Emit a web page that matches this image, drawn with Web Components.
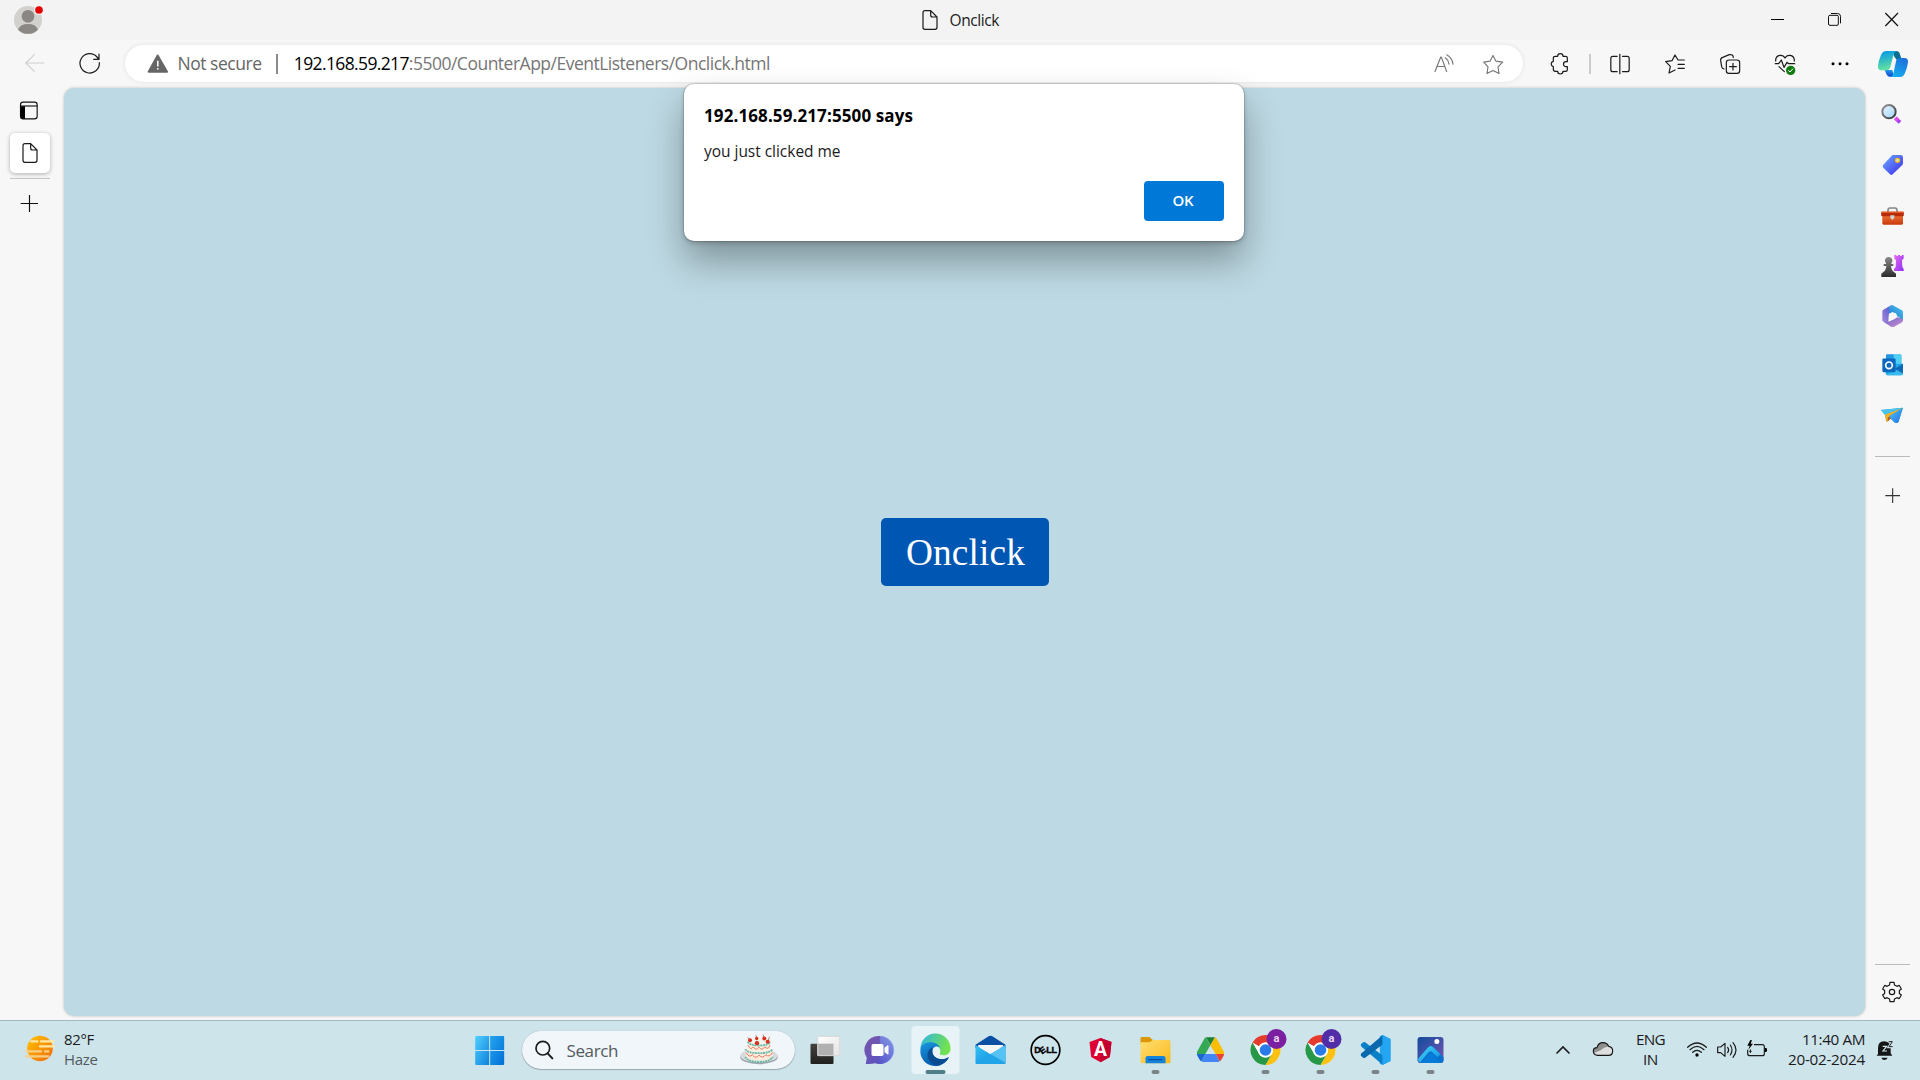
<!DOCTYPE html>
<html lang="en">
<head>
<meta charset="utf-8">
<title>Onclick</title>
<style>
html,body{margin:0;height:100%;overflow:hidden}
body{font-family:"Open Sans","Noto Sans",sans-serif;color:#1b1b1b;background:#f7f7f7}
</style>
</head>
<body>
<desk-top></desk-top>
<script>
/* Icons: [x, y, width, height, markup], three drawing units to one pixel. */
const gear=(cx,cy)=>{let p=[];for(let i=0;i<6;i++)for(const [a,r] of [[-19,22.5],[-12,29.5],[12,29.5],[19,22.5]]){const t=(i*60+a-90)*Math.PI/180;p.push((cx+r*Math.cos(t)).toFixed(1)+' '+(cy+r*Math.sin(t)).toFixed(1))}return 'M'+p.join('L')+'z'};
const line='fill="none" stroke="#1a1a1a" stroke-width="3.6" stroke-linecap="round" stroke-linejoin="round"';
const grey='fill="none" stroke="#757575" stroke-width="3.4" stroke-linecap="round" stroke-linejoin="round"';
const lg=(id,a,b,dir='0 0 1 1')=>{const d=dir.split(' ');return `<linearGradient id="${id}" x1="${d[0]}" y1="${d[1]}" x2="${d[2]}" y2="${d[3]}"><stop stop-color="${a}"/><stop offset="1" stop-color="${b}"/></linearGradient>`};
const dot=x=>`<rect x="${x-12}" y="180" width="24" height="12" rx="6" fill="#7a8487"/>`;
const chrome=(cx,badge)=>`<g transform="translate(${cx} 120)"><circle r="45" fill="#fff"/>
<path d="M-39-22.5A45 45 0 0 1 39-22.5H0A22.5 22.5 0 0 0-19.5-11z" fill="#e33b2e"/>
<path d="M39-22.5A45 45 0 0 1 0 45L19.5 11.2A22.5 22.5 0 0 0 0-22.5z" fill="#fdc112"/>
<path d="M0 45A45 45 0 0 1-39-22.5L-19.5 11.2A22.5 22.5 0 0 0 19.5 11.2z" fill="#279847"/>
<circle r="22.5" fill="#fff"/><circle r="17.5" fill="#2a7bea"/>
<circle cx="33" cy="-33" r="30" fill="${badge}"/><text x="33" y="-24" text-anchor="middle" font-family="Roboto" font-weight="700" font-size="33" fill="#e9d7f2">a</text></g>`+dot(cx);
const file='M75 431H92L111 450V481Q111 487 105 487H75Q69 487 69 481V437Q69 431 75 431zM92 431V444Q92 450 98 450H111';
const ICONS={
avatar:[39,12,96,96,'<circle cx="84" cy="60" r="42" fill="#d3d1cd"/><circle cx="84" cy="49" r="19" fill="#8a8784"/><path d="M54 89Q60 72 84 72T114 89A42 42 0 0 1 54 89z" fill="#8a8784"/><circle cx="117" cy="30" r="15" fill="#f3f3f3"/><circle cx="117" cy="30" r="11.5" fill="#e50000"/>'],
back:[72,159,66,66,'<path d="M133 189H77M104 163L77 189L104 215" fill="none" stroke="#cfcfcf" stroke-width="3.4"/>'],
reload:[237,159,66,66,`<path ${line} d="M298 188A29 29 0 1 1 291 171L296 177M297 162V178H281"/>`],
warn:[440,157.5,66,66,'<path d="M472 165L500 214H445z" fill="#666" stroke="#666" stroke-width="6" stroke-linejoin="round"/><path d="M472.500 181V198" stroke="#fff" stroke-width="4.500"/><circle cx="472.500" cy="205" r="2.800" fill="#fff"/>'],
tabs:[57,300,60,63,'<rect x="61.500" y="306.500" width="50" height="50" rx="8" fill="none" stroke="#111" stroke-width="3.400"/><path d="M62 318.500H75V356H68Q62 356 62 350z"/><path d="M62 318H112" stroke="#111" stroke-width="3.400"/>'],
file:[63,426,54,66,`<path ${line} d="${file}"/>`],
plus:[60,582,57,57,'<path d="M88.500 585V636M62 610.500H114" stroke="#111" stroke-width="3.500"/>'],
min:[1107,36,45,45,'<path d="M1110 58.500H1149" stroke="#000" stroke-width="3"/>'],
restore:[1278,36,45,45,'<path fill="none" stroke="#111" stroke-width="3" d="M1287 46H1308Q1312 46 1312 50V72Q1312 76 1308 76H1287Q1282.500 76 1282.500 72V50Q1282.500 46 1287 46zM1290 40.500H1310Q1318.500 41 1318.500 49V70"/>'],
close:[1451,36,45,45,'<path d="M1455 39L1493 78M1493 39L1455 78" stroke="#111" stroke-width="3.600"/>'],
read:[97,157.5,66,66,`<path ${grey} d="M103 213L120 170H122L138 213M109 198H132M134 172Q143 178 145 191M138 163Q154 171 157 191"/>`],
star:[244,157.5,66,66,`<path ${grey} d="M277 165L286 182L306 185L292 199L295 219L277 210L259 219L262 199L249 185L268 182z"/>`],
puzzle:[447,159,66,66,`<path ${line} d="M466 169H473A8 8 0 0 1 489 169H497Q502 169 502 174V185H498A7 7 0 0 0 498 200H502V209Q502 214 497 214H489A8 8 0 0 1 473 214H466Q460 214 460 208V200A8.200 8.200 0 0 1 460 184V174Q460 169 466 169z"/>`],
split:[625.5,159,66,66,`<path ${line} d="M650 169H637Q631 169 631 175V209Q631 215 637 215H650M666 169H680Q686 169 686 175V209Q686 215 680 215H666M658 163V221"/>`],
favs:[792,159,66,66,`<path ${line} d="M853 180H834L825 165L816 182L797 185L811 199L807 219L825 210M834 193H853M834 205H853"/>`],
coll:[957,159,66,66,`<path ${line} d="M987 180H1011Q1019 180 1019 188V212Q1019 220 1011 220H987Q979 220 979 212V188Q979 180 987 180zM999 190V210M989 200H1009M972 207Q966 205 965 200L962 182Q961 174 968 172L988 164Q999 162 1000 172"/>`],
heart:[1122,159,66,66,`<path ${line} d="M1127 183Q1126 168 1140 166Q1150 165 1155 174Q1160 165 1170 166Q1184 168 1183 183M1126 191H1136L1144 180L1152 202L1161 187L1166 191H1184M1137 200L1153 215"/><circle cx="1172" cy="211" r="14" fill="#107c10"/><path d="M1165 211L1170 216L1179 206" fill="none" stroke="#fff" stroke-width="3"/>`],
dots:[1287,159,66,66,'<circle cx="1299" cy="191.500" r="4.500"/><circle cx="1320" cy="191.500" r="4.500"/><circle cx="1341" cy="191.500" r="4.500"/>'],
copilot:[1431,144,96,96,lg('a','#0094ea','#62e2a0','0 0 0.2 1')+lg('b','#1e73dd','#12b9f3','0.6 0 0 1')+lg('c','#2099e8','#183fd0','0 0 0 1')+'<path d="M1476 153H1489Q1497 153 1500 163L1505 179H1490Q1483 174 1480 163z" fill="#086d91"/><path d="M1454 210H1477L1482 231H1473Q1463 231 1459 222z" fill="url(#c)"/><path d="M1459 153H1490Q1483 155 1481 163L1471 201Q1468 211 1459 211H1446Q1433 211 1434 197Q1435 184 1443 165Q1448 153 1459 153z" fill="url(#a)"/><path d="M1499 174H1513Q1525 174 1524 187Q1522 204 1514 221Q1509 231 1498 231H1469Q1478 229 1480 221L1488 184Q1490 174 1499 174z" fill="url(#b)"/>'],
lens:[180,70,72,66,lg('a','#eaf6ff','#9fd3ff')+lg('b','#999','#333')+'<path d="M226 115L240 128" stroke="#a63df4" stroke-width="11"/><path d="M226 115L234 122" stroke="#e14df6" stroke-width="11"/><circle cx="207" cy="96" r="20" fill="url(#a)" stroke="url(#b)" stroke-width="6"/>'],
tag:[180,223,72,66,lg('a','#6fb0ff','#3a25ef')+'<path d="M217 226H242Q249 226 249 233V251Q249 254 246 257L218 284Q214 288 210 284L190 264Q186 260 190 255z" fill="url(#a)"/><circle cx="232.500" cy="242" r="6" fill="#d8e7e0" stroke="#f4bd10" stroke-width="4"/>'],
tools:[180,375,72,66,lg('a','#f07030','#c73a10','0 0 0 1')+'<path d="M204 397V391Q204 384 210 384H225Q231 384 231 391V397" fill="none" stroke="#85898c" stroke-width="5"/><path d="M187 405H249V430Q249 434 245 434H191Q187 434 187 430z" fill="url(#a)"/><rect x="183.500" y="395" width="68" height="14" rx="3" fill="#b62c09"/><path d="M184 397H251" stroke="#e45a20" stroke-width="4"/><path d="M211 406H223V414L217 420L211 414z" fill="#cdd2d5"/>'],
games:[180,524,72,66,lg('a','#e86cf2','#8e30f2')+lg('b','#8a8a8a','#2c2c2c','0 0 0 1')+'<path d="M223 522H229V527H234V522H240V527H245V522H251V534Q251 538 246 539L247 560L251 566V572H222V566L227 560L228 539Q223 538 223 534z" fill="url(#a)"/><path d="M206 530A11 11 0 0 1 214 549V551H220V557H213Q214 572 224 576V579H228V590H184V579H188V576Q198 572 199 557H191V551H198V549A11 11 0 0 1 206 530z" fill="url(#b)"/>'],
m365:[180,43,72,66,lg('a','#4658c8','#a887dc','1 0 0 1')+lg('b','#4bc7ee','#2272cf','1 0 0 1')+lg('c','#6d67c9','#c98bd0')+'<path d="M218 43L207 49V68L205 92L212 97L201 99L187 90V62Q187 59 190 57L213 44Q215 42 218 43z" fill="url(#a)"/><path d="M232 80L249 84V90Q248 93 244 96L222 108Q218 110 213 108L188 92Q200 98 211 91z" fill="url(#c)"/><path d="M217 43L246 59Q249 61 249 65V87L232 77L228 68L217 65L207 69V49z" fill="url(#b)"/><path d="M217 65.500L227 71V82L217 87.500L207.500 82V71z" fill="#f7f7f7" stroke="#f7f7f7" stroke-linejoin="round"/>'],
outlook:[180,193.5,72,66,'<rect x="198" y="195" width="46" height="42" rx="3" fill="#1e8bdb"/><path d="M198 209V198Q198 195 201 195H221V209z" fill="#2196e2"/><path d="M221 195H240Q244 195 244 199V224H221z" fill="#4fd1f5"/><path d="M197 223H249V251Q249 257 243 257H203Q197 257 197 251z" fill="#22a7e8"/><path d="M224 238L249 223V255z" fill="#1069b7"/><path d="M226 239L249 252Q249 257 243 257H200z" fill="#38baf1"/><rect x="187" y="207" width="40" height="41" rx="4" fill="#0b68bd"/><circle cx="207" cy="227.500" r="10" fill="none" stroke="#fff" stroke-width="5"/>'],
plane:[180,342,72,66,lg('a','#4ac5ee','#256ff0')+'<path d="M183 360L249 353L236 396Q230 402 223 397L209 383L199 396L195 374z" fill="#26a4dd"/><path d="M195 373L249 354L208 378L202 395H199z" fill="#f7b11b"/><path d="M203 395V384L209 378L214 384z" fill="#b35c22"/><path d="M248 355L235 395Q230 402 223 397L207 379z" fill="url(#a)"/><path d="M183 360L248 353L194 374z" fill="#47c3ec"/>'],
thin:[190,591,52,52,'<path d="M216 595V639M194 617H238" stroke="#333" stroke-width="3.300"/>'],
gear:[484,124,66,66,`<path ${line} d="${gear(517,157)}"/><circle cx="517" cy="157" r="8" ${line}/>`],
sun:[69,30,102,180,lg('a','#ffc400','#f06a0a')+'<circle cx="120" cy="115.500" r="38.500" fill="url(#a)"/><g fill="none" stroke-linecap="round"><path d="M94 94H112M123 94H161M120 109H162" stroke="#ffe9a8" stroke-width="7"/><path d="M79 124H123M135 124H145M79 139H145" stroke="#f8cf87" stroke-width="7"/></g>'],
win:[5.5,30,165,180,lg('a','#52d0ff','#0d80dc')+lg('b','#25a5ef','#006fd6')+'<path d="M45 81Q45 78 48 78H87V120H45zM45 123H87V165H48Q45 165 45 162z" fill="url(#a)"/><path d="M90 78H129Q132 78 132 81V120H90zM90 123H132V162Q132 165 129 165H90z" fill="url(#b)"/>'],
find:[225,87,66,66,'<circle cx="251.500" cy="114.500" r="20.500" fill="none" stroke="#1b1b1b" stroke-width="5"/><path d="M266 130L280 145" stroke="#1b1b1b" stroke-width="6" stroke-linecap="round"/>'],
cake:[837,64.500,120,112,'<ellipse cx="897" cy="143" rx="56" ry="21" fill="#9ba4a8"/><ellipse cx="897" cy="139" rx="56" ry="20" fill="#d5dadd"/><path d="M857 118V143Q857 157 897 157T937 143V118z" fill="#f9ecda"/><ellipse cx="896" cy="119" rx="39" ry="10" fill="#fff4e2"/><path d="M863 94V115Q866 126 897 126T931 115V94z" fill="#fbefdc"/><ellipse cx="897" cy="95" rx="34" ry="12" fill="#f5f4ed"/><g fill="none" stroke="#63b8af" stroke-width="5.500" stroke-dasharray="6 2"><path d="M863 97Q870 108 897 108T931 97M856 119Q864 131 897 131T938 119M856 142Q864 157 897 157T938 142"/></g><g fill="none" stroke="#e8776b" stroke-width="3"><path d="M864 107Q872 124 880 112Q888 126 897 113Q906 126 914 112Q925 123 930 107M858 129Q868 146 877 136Q888 150 897 137Q908 149 917 136Q929 145 937 129"/></g><g fill="none" stroke="#8d4b3c" stroke-width="2"><path d="M870 92L863 84M890 86L888 77M913 86L909 75M924 97L928 82M891 101L890 94"/></g><g fill="#d8301f"><circle cx="870" cy="92" r="6"/><circle cx="890" cy="87" r="5"/><circle cx="913" cy="87" r="6"/><circle cx="891" cy="101" r="6.500"/><circle cx="923" cy="97" r="6"/></g>'],
task:[1015.5,30,165,180,lg('a','#43423f','#20201e','0 0 0 1')+lg('b','#fff','#e3e3e3')+'<rect x="1053" y="101" width="69" height="61" rx="3" fill="url(#a)"/><rect x="1074" y="78" width="68" height="60" rx="2" fill="url(#b)"/><path d="M1074 101H1122V138H1074z" fill="#b0b1b0"/><rect x="1075" y="79" width="66" height="58" rx="2" fill="none" stroke="#d6d6d6" stroke-width="3"/>'],
chat:[1180.5,30,165,180,lg('a','#7956a7','#5252cb')+lg('b','#8baaf5','#5558d0','0.6 0 0 1')+'<path d="M1261 78A43 42 0 1 1 1246 160Q1238 163 1219 162Q1220 153 1222 143A43 42 0 0 1 1261 78z" fill="url(#a)"/><path d="M1261 78A43 42 0 1 1 1261 162z" fill="url(#b)" opacity=".7"/><rect x="1236" y="102" width="36" height="36" rx="5" fill="#fff"/><path d="M1275 113L1284 106Q1287 105 1287 109V131Q1287 135 1284 133L1275 127z" fill="#fff"/>'],
edge:[25.5,30,165,180,lg('a','#2fb4e8','#73e34d','0 0 1 .3')+lg('b','#1898df','#0755a8','0 0 0.5 1')+'<rect x="36" y="48" width="144" height="144" rx="12" fill="#e8f3f8"/><path d="M63 117A45 45 0 0 1 153 114C155 132 135 142 120 132C125 128 124 111 108 105C91 99 72 105 63 117z" fill="url(#a)"/><path d="M63 116C69 91 111 91 122 113C110 104 96 113 99 129C104 147 128 154 147 141Q149 143 145 148A45 45 0 0 1 63 116z" fill="url(#b)"/><path d="M99 111C75 126 82 154 107 164C124 167 141 155 147 143C126 153 103 146 99 129Q98 118 99 111z" fill="#0a4c91"/><rect x="78" y="180" width="60" height="12" rx="6" fill="#4f7d8a"/>'],
mail:[190.5,30,165,180,lg('a','#36c4f5','#0c82dc')+'<path d="M228 104L265 80Q273 75 281 80L318 104V114H228z" fill="#0a4fa3"/><path d="M235 105H312L273 134z" fill="#fff"/><path d="M228 105L273 132L318 105V158Q318 162 314 162H232Q228 162 228 158z" fill="url(#a)"/><path d="M236 106H310V110L273 132L236 110z" fill="#f4f5f6"/><path d="M228 159L273 132L318 159Q317 162 314 162H232z" fill="#22a4e8"/><path d="M273 132L318 105V159z" fill="#54c2f3"/>'],
dell:[355.5,30,165,180,'<circle cx="438" cy="120" r="43" fill="none" stroke="#000" stroke-width="5"/><g font-family="Liberation Sans" font-weight="700" font-size="27" stroke="#000" stroke-width="1"><text x="404" y="130">D</text><text x="421" y="130" transform="rotate(-35 430 121)">E</text><text x="440" y="130">L</text><text x="456" y="130">L</text></g>'],
angular:[520.5,30,165,180,'<path d="M603 84L636 96L631 141L603 157L575 141L570 96z" fill="#dd0031"/><path d="M603 84L636 96L631 141L603 157z" fill="#c3002f"/><text x="603" y="137" text-anchor="middle" font-family="Roboto" font-weight="700" font-size="58" fill="#fff">A</text>'],
folder:[685.5,30,165,180,lg('a','#ffdf72','#fbb91c')+'<path d="M723 84Q723 81 727 81H750L761 91H780V105H723z" fill="#dd9807"/><path d="M723 97H748Q753 97 756 93L760 90H808Q813 90 813 95V155Q813 160 808 160H728Q723 160 723 155z" fill="url(#a)"/><path d="M738 160V145Q738 138 745 138H791Q798 138 798 145V160z" fill="#1384dc"/><path d="M748 149H787" stroke="#084f9f" stroke-width="4" stroke-linecap="round"/>'+dot(768)],
drive:[-20,30,165,180,'<path d="M49 82H76L62.500 106z" fill="#188038"/><path d="M49 82Q46 83 44 86L23 124Q21 128 22 132H47L62 106z" fill="#34a853"/><path d="M76 82Q79 83 81 86L102 124Q104 128 103 132H78L62 106z" fill="#fbbc04"/><path d="M47 132H78L90 154Q88 156 84 156H41Q37 156 35 154z" fill="#4285f4"/><path d="M22 132H47L35 154Q32 152 30 149L24 139Q22 136 22 132z" fill="#1967d2"/><path d="M103 132H78L90 154Q93 152 95 149L101 139Q103 136 103 132z" fill="#ea4335"/>'],
chromeA:[145.5,30,165,180,chrome(228,'#7b1fa2')],
chromeB:[310.5,30,165,180,chrome(393,'#512da8')],
code:[475.5,30,165,180,'<path d="M579 75L603 87V153L579 165L571 161V79z" fill="#23a5f1"/><path d="M514 103L521 97Q524 95 527 97L580 137V165L516 110Q513 106 514 103z" fill="#0c7fc9"/><path d="M514 137L521 143Q524 145 527 143L580 103V75L516 130Q513 134 514 137z" fill="#0968ae"/><path d="M579 75L603 87V153L579 165z" fill="#23a5f1"/>'+dot(558)],
photos:[640.5,30,165,180,lg('a','#124b9c','#7557b4')+lg('b','#42d6f8','#118fe2')+'<rect x="684" y="81" width="78" height="78" rx="9" fill="url(#a)"/><path d="M685 150L715 114Q723 103 733 113L762 142V150Q762 159 753 159H693Q687 159 685 150z" fill="#0772cd"/><path d="M686 146L714 114Q723 103 733 113L753 133L744 142L728 126Q723 121 718 126L692 157Q685 155 686 146z" fill="url(#b)"/><path d="M696 159L718 133Q724 127 730 133L754 158L753 159z" fill="#087bd8"/><circle cx="742" cy="94.500" r="7.500" fill="#fff"/>'+dot(723)],
up:[54,30,90,180,'<path d="M81 129L99 111L117 129" fill="none" stroke="#1b1b1b" stroke-width="5" stroke-linecap="round"/>'],
cloud:[174,30,90,180,'<path d="M201 136Q190 134 190 124Q190 113 201 113Q205 98 219 98Q231 98 236 109Q249 111 248 124Q247 136 236 136z" fill="#dedede"/><path d="M201 125Q190 132 190 124Q190 113 201 113Q205 98 219 98Q231 98 236 109L222 113Q213 122 201 125z" fill="#8e8e8e"/><path d="M201 136Q190 134 190 124Q190 113 201 113Q205 98 219 98Q231 98 236 109Q249 111 248 124Q247 136 236 136z" fill="none" stroke="#151515" stroke-width="3.300"/>'],
wifi:[459,30,90,180,'<g fill="none" stroke="#1b1b1b" stroke-width="3.800" stroke-linecap="round"><path d="M476 112Q504 86 532 112M483 119Q504 99 525 119M491 127Q504 115 517 127"/></g><circle cx="504" cy="135" r="5"/>'],
sound:[549,30,90,180,'<path d="M566 111H575L588 100V139L575 128H566z" fill="none" stroke="#1b1b1b" stroke-width="3.500" stroke-linejoin="round"/><path d="M596 112Q602 120 596 128M604 105Q614 120 604 135M612 98Q630 120 612 142" fill="none" stroke="#1b1b1b" stroke-width="3.500" stroke-linecap="round"/>'],
battery:[639,30,90,180,'<path d="M675 104H700Q706 104 706 110V131Q706 137 700 137H664Q656 137 656 131V119" fill="none" stroke="#1b1b1b" stroke-width="3.500"/><path d="M707 114H710Q714 114 714 118V122Q714 126 710 126H707z"/><path d="M664 90L655 107H662L658 119L672 101H665L669 91z"/><path d="M664 118V129M661 124H668" stroke="#1b1b1b" stroke-width="3"/>'],
bell:[1022,30,90,180,'<path d="M1046 132V115Q1046 94 1064 94Q1082 94 1084 113V130L1089 137H1042z" fill="#151515"/><path d="M1056 143H1075Q1072 150 1065 150T1056 143z" fill="#151515"/><path d="M1060 109H1072L1061 123H1073" fill="none" stroke="#d3e6ec" stroke-width="3.500"/><path d="M1078 94H1090L1079 111H1090" fill="none" stroke="#cfe5eb" stroke-width="8"/><path d="M1078 95H1089L1079 110H1090" fill="none" stroke="#222" stroke-width="3"/>']
};
const define=(name,html,after)=>{const t=document.createElement('template');t.innerHTML=html;customElements.define(name,class extends HTMLElement{connectedCallback(){if(this.shadowRoot)return;this.attachShadow({mode:'open'}).append(t.content.cloneNode(true));after&&after(this,this.shadowRoot)}})};

define('ui-icon','<style>:host{display:block;flex:none}div,svg{display:block}</style><div></div>',(h,r)=>{
 const [x,y,w,k,m]=ICONS[h.getAttribute('name')];
 r.querySelector('div').innerHTML=`<svg width="${w/3}" height="${k/3}" viewBox="${x} ${y} ${w} ${k}">${m}</svg>`;
});
/* Text whose tracking is set so that it fills the width given in "w". */
define('ui-text','<style>:host{display:block;flex:none;white-space:nowrap}span{display:inline-block}</style><span><slot></slot></span>',(h,r)=>{
 const s=r.querySelector('span'),n=h.textContent.length;
 h.style.fontSize=h.getAttribute('size')+'px';
 const w=+h.getAttribute('w');
 s.style.letterSpacing=((w-s.getBoundingClientRect().width)/n).toFixed(3)+'px';
 h.style.width=w+'px';
});
define('title-bar',`<style>:host{display:flex;align-items:center;height:40px;background:#f3f3f3}
.tab{display:flex;align-items:center;margin-left:876px;gap:10.500px;flex:1}.win{display:flex;gap:42px;padding:0 21.300px 1px 0}ui-icon[name=avatar]{margin-left:13px}</style>
<ui-icon name="avatar"></ui-icon><div class="tab"><ui-icon name="file"></ui-icon><ui-text w="49.500" size="15.5">Onclick</ui-text></div>
<div class="win"><ui-icon name="min"></ui-icon><ui-icon name="restore"></ui-icon><ui-icon name="close"></ui-icon></div>`);
define('address-bar',`<style>:host{display:flex;align-items:center;box-sizing:border-box;width:1398px;height:37px;border-radius:19px;background:#fff;box-shadow:0 0 5px rgba(0,0,0,.09);padding:0 19.300px 0 21.700px;color:#666;flex:none}
ui-text{margin-bottom:1px}.s{margin-left:8.800px}i{width:1.700px;height:20px;background:#8a8a8a;margin:0 16px 0 14.700px}.h{color:#000}.end{display:flex;gap:27px;margin-left:auto}</style>
<ui-icon name="warn"></ui-icon><ui-text class="s" w="84" size="17.5">Not secure</ui-text><i></i><ui-text class="h" w="115" size="17.5">192.168.59.217</ui-text><ui-text w="361" size="17.5" style="color:#767676">:5500/CounterApp/EventListeners/Onclick.html</ui-text>
<div class="end"><ui-icon name="read"></ui-icon><ui-icon name="star"></ui-icon></div>`);
define('tool-bar',`<style>:host{display:flex;align-items:center;height:48px;background:#f7f7f7;padding-left:24px}
address-bar{margin:0 26px 1px 24px}.r{margin-left:33px}i{width:1.700px;height:20px;background:#ccc;margin:0 18.400px 0 18px}.g{display:flex;gap:33.100px;align-items:center}ui-icon[name=copilot]{margin-left:26px}</style>
<ui-icon name="back"></ui-icon><ui-icon class="r" name="reload"></ui-icon><address-bar></address-bar><ui-icon name="puzzle"></ui-icon><i></i>
<div class="g"><ui-icon name="split"></ui-icon><ui-icon name="favs"></ui-icon><ui-icon name="coll"></ui-icon><ui-icon name="heart"></ui-icon><ui-icon name="dots"></ui-icon></div><ui-icon name="copilot"></ui-icon>`);
define('tab-rail',`<style>:host{display:flex;flex-direction:column;width:64px;padding-top:12px;box-sizing:border-box;flex:none}
ui-icon[name=tabs]{margin-left:19px}.t{width:40px;height:40px;margin:12px 0 0 10px;background:#fff;border-radius:5px;box-shadow:0 1px 4px rgba(0,0,0,.3);display:flex;align-items:center;justify-content:center}
i{height:1px;width:40px;background:#c4c4c4;margin:5px 0 0 10px}ui-icon[name=plus]{margin:15px 0 0 20px}</style>
<ui-icon name="tabs"></ui-icon><div class="t"><ui-icon name="file"></ui-icon></div><i></i><ui-icon name="plus"></ui-icon>`);
define('web-page',`<style>:host{display:flex;align-items:center;justify-content:center;width:1801px;height:928px;border-radius:10px;background:#bdd9e3;box-shadow:0 0 3px rgba(0,0,0,.25);flex:none}
button{all:unset;box-sizing:border-box;width:168px;height:68px;padding-left:2px;background:#0056b3;border-radius:5px;color:#fff;font-family:"Liberation Serif",serif;display:flex;align-items:center;justify-content:center}</style>
<button><ui-text w="119" size="37.3">Onclick</ui-text></button>`);
define('side-bar',`<style>:host{display:flex;flex-direction:column;align-items:center;width:55px;padding-top:15.400px;padding-right:.6px;box-sizing:border-box;height:932px;flex:1}
.a{display:flex;flex-direction:column;gap:27.800px;align-items:center}[name=tag]{margin-top:1.100px}[name=tools]{margin-top:.9px}i{width:35px;height:1px;background:#bbb;flex:none}.a+i{margin-top:29.800px}ui-icon[name=thin]{margin-top:30.300px}.b{margin-top:auto;display:flex;flex-direction:column;align-items:center;gap:16.300px;padding-bottom:16.700px}</style>
<div class="a"><ui-icon name="lens"></ui-icon><ui-icon name="tag"></ui-icon><ui-icon name="tools"></ui-icon><ui-icon name="games"></ui-icon><ui-icon name="m365"></ui-icon><ui-icon name="outlook"></ui-icon><ui-icon name="plane"></ui-icon></div><i></i><ui-icon name="thin"></ui-icon>
<div class="b"><i></i><ui-icon name="gear"></ui-icon></div>`);
define('alert-dialog',`<style>:host{position:absolute;left:684px;top:84px;width:560px;height:157px;box-sizing:border-box;background:#fff;border-radius:10px;padding:19px 20px 20px;display:flex;flex-direction:column;box-shadow:0 0 0 1px rgba(0,0,0,.12),0 2px 5px rgba(0,0,0,.2),0 20px 36px rgba(0,0,0,.32)}
h1{margin:0;font-size:17px;line-height:26px;font-weight:700;color:#000}p{margin:10px 0 0;line-height:24px}button{all:unset;box-sizing:border-box;width:80px;height:40px;padding:0 2px 2px 0;border-radius:4px;background:#0078d7;color:#fff;font-weight:600;display:flex;align-items:center;justify-content:center;margin:auto 0 0 auto}</style>
<h1><ui-text w="209" size="17">192.168.59.217:5500 says</ui-text></h1><p><ui-text w="136.500" size="15.5">you just clicked me</ui-text></p><button><ui-text w="21" size="15">OK</ui-text></button>`);
define('task-bar',`<style>:host{display:flex;align-items:center;height:60px;background:linear-gradient(#a5b7be 1px,#cee4eb 1px);color:#1b1b1b}
.st{display:flex;flex-direction:column;line-height:20px;padding-bottom:2px}.w{margin-left:7px}.hz{color:#515b5f}ui-icon[name=sun]{margin-left:23px}
.mid{display:flex;align-items:center}ui-icon[name=win]{margin-left:364px}
.s{display:flex;align-items:center;box-sizing:border-box;width:273px;height:38.500px;margin:0 3.500px 0 5.300px;border-radius:20px;background:#f0f6f9;box-shadow:0 1px 1px rgba(0,0,0,.25),0 0 1px rgba(0,0,0,.25);padding:0 15.500px 0 12.500px}.s ui-text{margin-left:10.200px;color:#555b5e}.s ui-icon:last-child{margin-left:auto}
.tray{display:flex;align-items:center;margin-left:89.500px}.c{align-items:center;width:28px;margin:0 18px 0 18.600px}.cl{margin-left:10px}.d{align-items:flex-end;width:77px;margin:0 5px 0 15.600px}</style>
<ui-icon name="sun"></ui-icon><div class="st w"><ui-text w="30" size="15">82°F</ui-text><ui-text class="hz" w="33.500" size="15">Haze</ui-text></div>
<div class="mid"><ui-icon name="win"></ui-icon><div class="s"><ui-icon name="find"></ui-icon><ui-text w="51.500" size="17">Search</ui-text><ui-icon name="cake"></ui-icon></div>
${['task','chat','edge','mail','dell','angular','folder','drive','chromeA','chromeB','code','photos'].map(n=>`<ui-icon name="${n}"></ui-icon>`).join('')}</div>
<div class="tray"><ui-icon name="up"></ui-icon><ui-icon class="cl" name="cloud"></ui-icon><div class="st c"><ui-text w="29" size="15.3">ENG</ui-text><ui-text w="15" size="15.3">IN</ui-text></div>
<ui-icon name="wifi"></ui-icon><ui-icon name="sound"></ui-icon><ui-icon name="battery"></ui-icon><div class="st d"><ui-text w="63" size="15.3">11:40 AM</ui-text><ui-text w="77" size="15.3">20-02-2024</ui-text></div><ui-icon name="bell"></ui-icon></div>`);
define('desk-top',`<style>:host{display:flex;flex-direction:column;width:1920px;height:1080px;position:relative;overflow:hidden}.m{display:flex;height:932px}</style>
<title-bar></title-bar><tool-bar></tool-bar><div class="m"><tab-rail></tab-rail><web-page></web-page><side-bar></side-bar></div><task-bar></task-bar><alert-dialog></alert-dialog>`);
</script>
</body>
</html>
